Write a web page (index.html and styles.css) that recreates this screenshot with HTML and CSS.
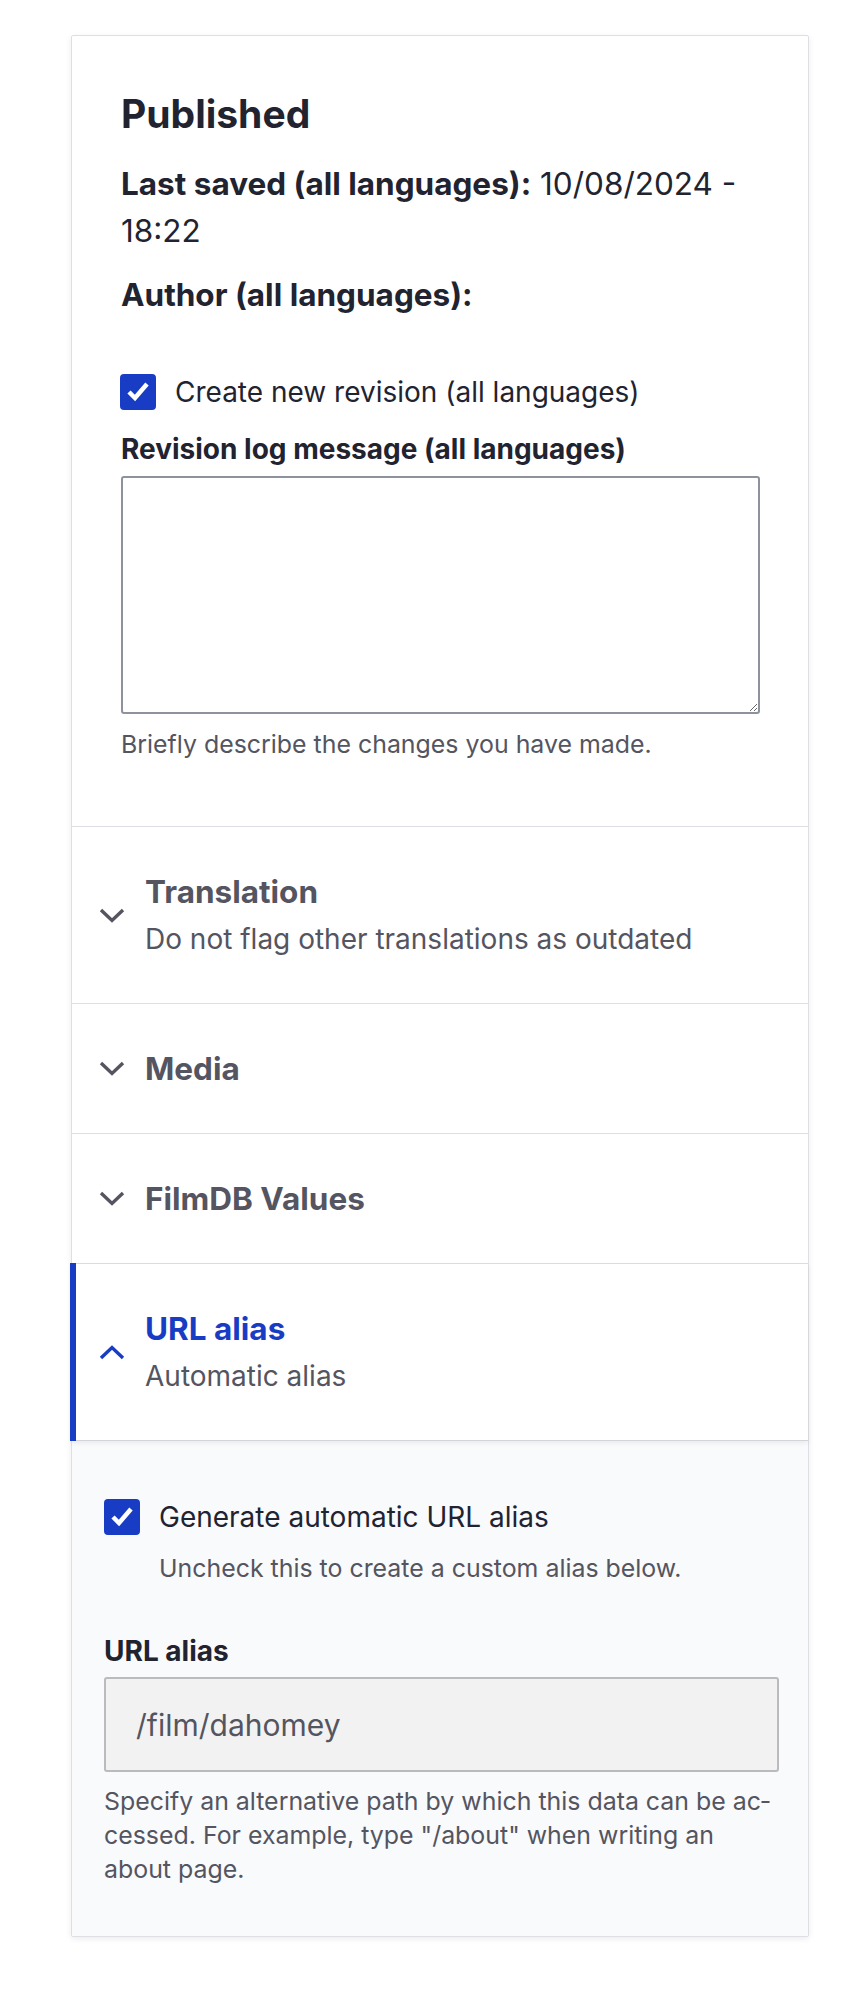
FILE: index.html
```html
<!DOCTYPE html>
<html lang="en">
<head>
<meta charset="utf-8">
<title>Entity meta</title>
<link rel="stylesheet" href="styles.css">
</head>
<body>
<div class="page">
  <aside class="meta-card">
    <section class="meta-header">
      <h3 class="meta-title">Published</h3>
      <div class="meta-item meta-saved"><span class="meta-label">Last saved (all languages):</span> <span class="meta-value">10/08/2024 -</span> <span class="meta-value">18:22</span></div>
      <div class="meta-item meta-author"><span class="meta-label">Author (all languages):</span></div>
      <label class="check-row check-row--revision">
        <span class="checkbox"><svg viewBox="0 0 36 36" width="36" height="36" aria-hidden="true"><polyline points="9,18 15,24 27,10" fill="none" stroke="#fff" stroke-width="4.5" stroke-linecap="butt" stroke-linejoin="miter"/></svg></span>
        <span class="check-label">Create new revision (all languages)</span>
      </label>
      <label class="field-label" for="revision-log">Revision log message (all languages)</label>
      <textarea id="revision-log" class="textarea"></textarea>
      <p class="description">Briefly describe the changes you have made.</p>
    </section>

    <details class="acc">
      <summary class="acc-summary">
        <svg class="chevron" viewBox="0 0 26 15" width="26" height="15" aria-hidden="true"><polyline points="2,2 13,12.5 24,2" fill="none" stroke="currentColor" stroke-width="3.4"/></svg>
        <span class="acc-text">
          <span class="acc-title">Translation</span>
          <span class="acc-sub">Do not flag other translations as outdated</span>
        </span>
      </summary>
    </details>

    <details class="acc">
      <summary class="acc-summary">
        <svg class="chevron" viewBox="0 0 26 15" width="26" height="15" aria-hidden="true"><polyline points="2,2 13,12.5 24,2" fill="none" stroke="currentColor" stroke-width="3.4"/></svg>
        <span class="acc-text">
          <span class="acc-title">Media</span>
        </span>
      </summary>
    </details>

    <details class="acc">
      <summary class="acc-summary">
        <svg class="chevron" viewBox="0 0 26 15" width="26" height="15" aria-hidden="true"><polyline points="2,2 13,12.5 24,2" fill="none" stroke="currentColor" stroke-width="3.4"/></svg>
        <span class="acc-text">
          <span class="acc-title">FilmDB Values</span>
        </span>
      </summary>
    </details>

    <details class="acc acc--open" open>
      <summary class="acc-summary">
        <svg class="chevron" viewBox="0 0 26 15" width="26" height="15" aria-hidden="true"><polyline points="2,13 13,2.5 24,13" fill="none" stroke="currentColor" stroke-width="3.4"/></svg>
        <span class="acc-text">
          <span class="acc-title">URL alias</span>
          <span class="acc-sub">Automatic alias</span>
        </span>
      </summary>
      <div class="acc-body">
        <label class="check-row">
          <span class="checkbox"><svg viewBox="0 0 36 36" width="36" height="36" aria-hidden="true"><polyline points="9,18 15,24 27,10" fill="none" stroke="#fff" stroke-width="4.5" stroke-linecap="butt" stroke-linejoin="miter"/></svg></span>
          <span class="check-label">Generate automatic URL alias</span>
        </label>
        <p class="description description--check">Uncheck this to create a custom alias below.</p>
        <label class="field-label field-label--alias" for="url-alias">URL alias</label>
        <input id="url-alias" class="text-input" type="text" value="/film/dahomey" disabled>
        <p class="description description--help">Specify an alternative path by which this data can be ac&shy;cessed. For example, type "/about" when writing an about page.</p>
      </div>
    </details>
  </aside>
</div>
</body>
</html>
```

FILE: styles.css
```css
* {
  box-sizing: border-box;
}

html,
body {
  margin: 0;
  background: #ffffff;
}

body {
  font-family: Inter, "Noto Sans", "DejaVu Sans", sans-serif;
  color: #222330;
  font-size: 28px;
  line-height: 42px;
}

.page {
  padding: 35px 0 56px 71px;
}

.meta-card {
  width: 738px;
  background: #ffffff;
  border: 1px solid #dedfe4;
  border-radius: 2px;
  box-shadow: 0 2px 6px rgba(0, 0, 0, 0.08);
}

/* ---------- header ---------- */
.meta-header {
  padding: 54px 48px 65px 49px;
}

.meta-title {
  margin: 0 0 22px;
  font-size: 39px;
  line-height: 48px;
  font-weight: 700;
}

.meta-item {
  font-size: 31.5px;
  line-height: 47px;
}

.meta-author {
  margin-top: 17px;
}

.meta-label {
  font-weight: 700;
}

.check-row {
  display: flex;
  align-items: center;
  gap: 19px;
  height: 42px;
}

.check-row--revision {
  margin-top: 53px;
  margin-left: -1px;
}

.checkbox {
  flex: none;
  width: 36px;
  height: 36px;
  border-radius: 4px;
  background: #183dc4;
  display: flex;
}

.checkbox svg {
  display: block;
}

.field-label {
  display: block;
  margin-top: 15px;
  font-weight: 700;
  line-height: 42px;
}

.textarea {
  display: block;
  width: 100%;
  height: 238px;
  margin: 6px 0 0;
  border: 2px solid #8e929c;
  border-radius: 3px;
  background: #ffffff;
  font: inherit;
  resize: vertical;
}

.description {
  margin: 13px 0 0;
  font-size: 24.9px;
  line-height: 34px;
  color: #545560;
}

/* ---------- accordion items ---------- */
.acc {
  border-top: 1px solid #dedfe4;
}

.acc-summary {
  list-style: none;
  display: flex;
  align-items: center;
  gap: 20px;
  padding: 44px 20px 44px 27px;
  color: #545560;
  cursor: pointer;
}

.acc-summary::-webkit-details-marker {
  display: none;
}

.chevron {
  flex: none;
  display: block;
}

.acc-text {
  display: flex;
  flex-direction: column;
}

.acc-title {
  font-size: 31.5px;
  line-height: 41px;
  font-weight: 700;
}

.acc-sub {
  margin-top: 7px;
  line-height: 40px;
}

.acc--open .acc-summary {
  position: relative;
  border-bottom: 1px solid #d3d4d9;
  box-shadow: 0 2px 5px rgba(0, 0, 0, 0.07);
}

.acc--open .acc-summary::before {
  content: "";
  position: absolute;
  left: -2px;
  top: -1px;
  bottom: -1px;
  width: 6px;
  background: #183dc4;
}

.acc--open .chevron,
.acc--open .acc-title {
  color: #183dc4;
}

.acc-body {
  background: #f9fafc;
  padding: 55px 29px 50px 32px;
}

.description--check {
  margin-left: 55px;
}

.field-label--alias {
  margin-top: 45px;
}

.text-input {
  display: block;
  width: 100%;
  height: 95px;
  margin-top: 5px;
  padding: 0 30px;
  border: 2px solid #bababf;
  border-radius: 3px;
  background: #f2f2f3;
  color: #545560;
  font: inherit;
  font-size: 30px;
  -webkit-text-fill-color: #545560;
  opacity: 1;
}

.description--help {
  margin-top: 12px;
}
```
